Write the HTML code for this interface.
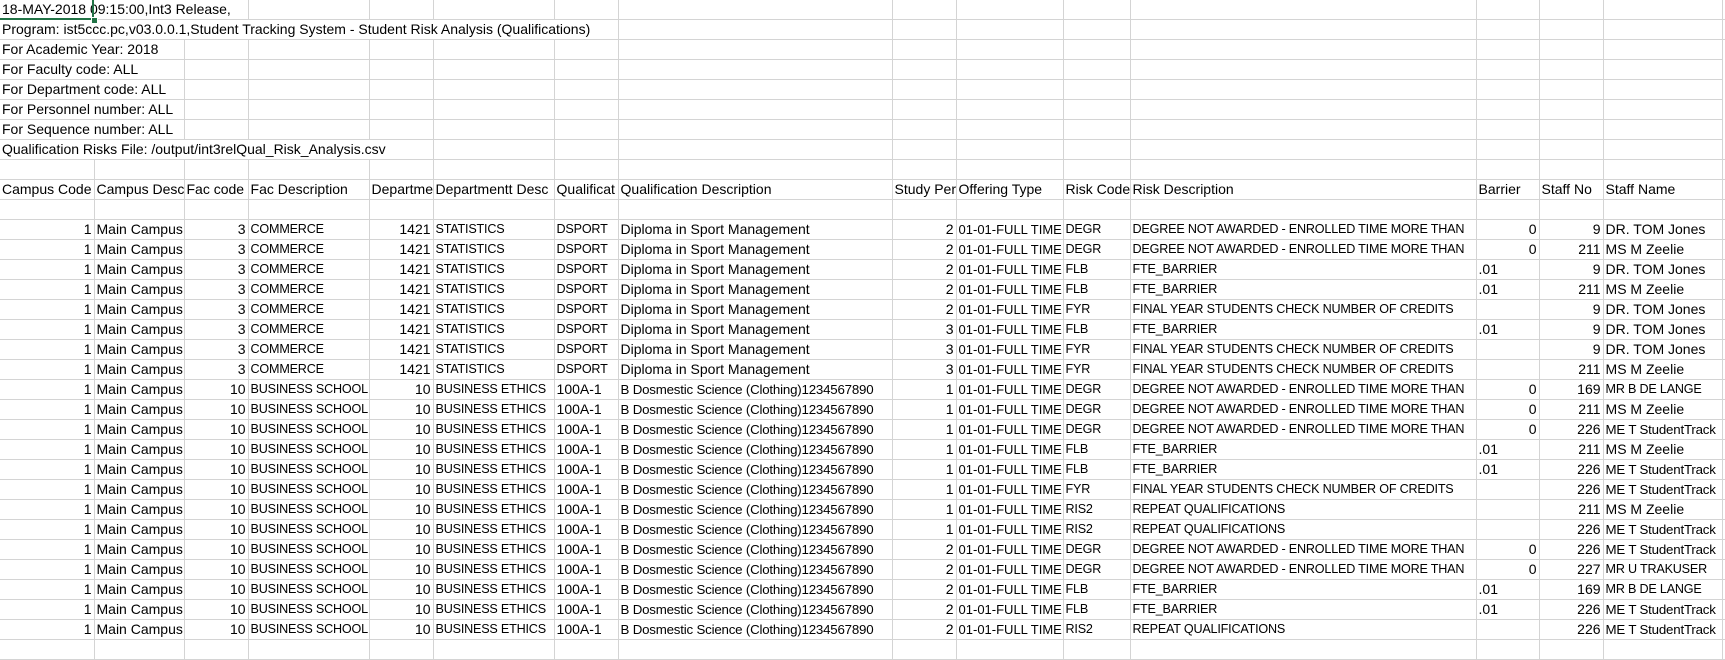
<!DOCTYPE html>
<html><head><meta charset="utf-8">
<style>
html,body{margin:0;padding:0;background:#fff;}
body{width:1725px;height:646px;overflow:hidden;position:relative;font-family:"Liberation Sans",Arial,sans-serif;font-size:14px;color:#000;}
table{border-collapse:collapse;table-layout:fixed;position:absolute;left:0;top:0;width:1725px;}
td{height:19px;padding:0 2px;border-right:1px solid #d4d4d4;border-bottom:1px solid #d4d4d4;white-space:nowrap;overflow:hidden;line-height:19px;vertical-align:middle;}
td.r{text-align:right;}
td.c{font-size:12.6px;letter-spacing:-0.2px;}
td.n{font-size:13px;}
td.t{font-size:13.3px;letter-spacing:-0.2px;}
.sel{position:absolute;left:0;top:0;width:92px;height:18px;border:2px solid #217346;border-left:none;border-top:none;}
.sq{position:absolute;left:91px;top:17px;width:5px;height:5px;background:#217346;border:1px solid #fff;}
</style></head><body>
<table>
<colgroup><col style="width:94px"><col style="width:90px"><col style="width:64px"><col style="width:121px"><col style="width:64px"><col style="width:121px"><col style="width:64px"><col style="width:274px"><col style="width:64px"><col style="width:107px"><col style="width:67px"><col style="width:346px"><col style="width:63px"><col style="width:64px"><col style="width:119px"><col style="width:3px"></colgroup>
<tr><td colspan="3">18-MAY-2018 09:15:00,Int3 Release,</td><td></td><td></td><td></td><td></td><td></td><td></td><td></td><td></td><td></td><td></td><td></td><td></td><td></td></tr>
<tr><td colspan="7">Program: ist5ccc.pc,v03.0.0.1,Student Tracking System - Student Risk Analysis (Qualifications)</td><td></td><td></td><td></td><td></td><td></td><td></td><td></td><td></td><td></td></tr>
<tr><td colspan="2">For Academic Year: 2018</td><td></td><td></td><td></td><td></td><td></td><td></td><td></td><td></td><td></td><td></td><td></td><td></td><td></td></tr>
<tr><td colspan="2">For Faculty code: ALL</td><td></td><td></td><td></td><td></td><td></td><td></td><td></td><td></td><td></td><td></td><td></td><td></td><td></td></tr>
<tr><td colspan="2">For Department code: ALL</td><td></td><td></td><td></td><td></td><td></td><td></td><td></td><td></td><td></td><td></td><td></td><td></td><td></td></tr>
<tr><td colspan="2">For Personnel number: ALL</td><td></td><td></td><td></td><td></td><td></td><td></td><td></td><td></td><td></td><td></td><td></td><td></td><td></td></tr>
<tr><td colspan="2">For Sequence number: ALL</td><td></td><td></td><td></td><td></td><td></td><td></td><td></td><td></td><td></td><td></td><td></td><td></td><td></td></tr>
<tr><td colspan="5">Qualification Risks File: /output/int3relQual_Risk_Analysis.csv</td><td></td><td></td><td></td><td></td><td></td><td></td><td></td><td></td><td></td><td></td><td></td></tr>
<tr><td></td><td></td><td></td><td></td><td></td><td></td><td></td><td></td><td></td><td></td><td></td><td></td><td></td><td></td><td></td><td></td></tr>
<tr><td>Campus Code</td><td>Campus Desc</td><td>Fac code</td><td>Fac Description</td><td>Departme</td><td>Departmentt Desc</td><td>Qualificat</td><td>Qualification Description</td><td>Study Peri</td><td>Offering Type</td><td>Risk Code</td><td>Risk Description</td><td>Barrier</td><td>Staff No</td><td>Staff Name</td><td></td></tr>
<tr><td></td><td></td><td></td><td></td><td></td><td></td><td></td><td></td><td></td><td></td><td></td><td></td><td></td><td></td><td></td><td></td></tr>
<tr><td class="r">1</td><td>Main Campus</td><td class="r">3</td><td class="c">COMMERCE</td><td class="r">1421</td><td class="c">STATISTICS</td><td class="c">DSPORT</td><td>Diploma in Sport Management</td><td class="r">2</td><td class="n">01-01-FULL TIME</td><td class="c">DEGR</td><td class="c">DEGREE NOT AWARDED - ENROLLED TIME MORE THAN</td><td class="r">0</td><td class="r">9</td><td>DR. TOM Jones</td><td></td></tr>
<tr><td class="r">1</td><td>Main Campus</td><td class="r">3</td><td class="c">COMMERCE</td><td class="r">1421</td><td class="c">STATISTICS</td><td class="c">DSPORT</td><td>Diploma in Sport Management</td><td class="r">2</td><td class="n">01-01-FULL TIME</td><td class="c">DEGR</td><td class="c">DEGREE NOT AWARDED - ENROLLED TIME MORE THAN</td><td class="r">0</td><td class="r">211</td><td>MS M Zeelie</td><td></td></tr>
<tr><td class="r">1</td><td>Main Campus</td><td class="r">3</td><td class="c">COMMERCE</td><td class="r">1421</td><td class="c">STATISTICS</td><td class="c">DSPORT</td><td>Diploma in Sport Management</td><td class="r">2</td><td class="n">01-01-FULL TIME</td><td class="c">FLB</td><td class="c">FTE_BARRIER</td><td>.01</td><td class="r">9</td><td>DR. TOM Jones</td><td></td></tr>
<tr><td class="r">1</td><td>Main Campus</td><td class="r">3</td><td class="c">COMMERCE</td><td class="r">1421</td><td class="c">STATISTICS</td><td class="c">DSPORT</td><td>Diploma in Sport Management</td><td class="r">2</td><td class="n">01-01-FULL TIME</td><td class="c">FLB</td><td class="c">FTE_BARRIER</td><td>.01</td><td class="r">211</td><td>MS M Zeelie</td><td></td></tr>
<tr><td class="r">1</td><td>Main Campus</td><td class="r">3</td><td class="c">COMMERCE</td><td class="r">1421</td><td class="c">STATISTICS</td><td class="c">DSPORT</td><td>Diploma in Sport Management</td><td class="r">2</td><td class="n">01-01-FULL TIME</td><td class="c">FYR</td><td class="c">FINAL YEAR STUDENTS CHECK NUMBER OF CREDITS</td><td></td><td class="r">9</td><td>DR. TOM Jones</td><td></td></tr>
<tr><td class="r">1</td><td>Main Campus</td><td class="r">3</td><td class="c">COMMERCE</td><td class="r">1421</td><td class="c">STATISTICS</td><td class="c">DSPORT</td><td>Diploma in Sport Management</td><td class="r">3</td><td class="n">01-01-FULL TIME</td><td class="c">FLB</td><td class="c">FTE_BARRIER</td><td>.01</td><td class="r">9</td><td>DR. TOM Jones</td><td></td></tr>
<tr><td class="r">1</td><td>Main Campus</td><td class="r">3</td><td class="c">COMMERCE</td><td class="r">1421</td><td class="c">STATISTICS</td><td class="c">DSPORT</td><td>Diploma in Sport Management</td><td class="r">3</td><td class="n">01-01-FULL TIME</td><td class="c">FYR</td><td class="c">FINAL YEAR STUDENTS CHECK NUMBER OF CREDITS</td><td></td><td class="r">9</td><td>DR. TOM Jones</td><td></td></tr>
<tr><td class="r">1</td><td>Main Campus</td><td class="r">3</td><td class="c">COMMERCE</td><td class="r">1421</td><td class="c">STATISTICS</td><td class="c">DSPORT</td><td>Diploma in Sport Management</td><td class="r">3</td><td class="n">01-01-FULL TIME</td><td class="c">FYR</td><td class="c">FINAL YEAR STUDENTS CHECK NUMBER OF CREDITS</td><td></td><td class="r">211</td><td>MS M Zeelie</td><td></td></tr>
<tr><td class="r">1</td><td>Main Campus</td><td class="r">10</td><td class="c">BUSINESS SCHOOL</td><td class="r">10</td><td class="c">BUSINESS ETHICS</td><td>100A-1</td><td class="t">B Dosmestic Science (Clothing)1234567890</td><td class="r">1</td><td class="n">01-01-FULL TIME</td><td class="c">DEGR</td><td class="c">DEGREE NOT AWARDED - ENROLLED TIME MORE THAN</td><td class="r">0</td><td class="r">169</td><td class="c">MR B DE LANGE</td><td></td></tr>
<tr><td class="r">1</td><td>Main Campus</td><td class="r">10</td><td class="c">BUSINESS SCHOOL</td><td class="r">10</td><td class="c">BUSINESS ETHICS</td><td>100A-1</td><td class="t">B Dosmestic Science (Clothing)1234567890</td><td class="r">1</td><td class="n">01-01-FULL TIME</td><td class="c">DEGR</td><td class="c">DEGREE NOT AWARDED - ENROLLED TIME MORE THAN</td><td class="r">0</td><td class="r">211</td><td>MS M Zeelie</td><td></td></tr>
<tr><td class="r">1</td><td>Main Campus</td><td class="r">10</td><td class="c">BUSINESS SCHOOL</td><td class="r">10</td><td class="c">BUSINESS ETHICS</td><td>100A-1</td><td class="t">B Dosmestic Science (Clothing)1234567890</td><td class="r">1</td><td class="n">01-01-FULL TIME</td><td class="c">DEGR</td><td class="c">DEGREE NOT AWARDED - ENROLLED TIME MORE THAN</td><td class="r">0</td><td class="r">226</td><td class="t">ME T StudentTrack</td><td></td></tr>
<tr><td class="r">1</td><td>Main Campus</td><td class="r">10</td><td class="c">BUSINESS SCHOOL</td><td class="r">10</td><td class="c">BUSINESS ETHICS</td><td>100A-1</td><td class="t">B Dosmestic Science (Clothing)1234567890</td><td class="r">1</td><td class="n">01-01-FULL TIME</td><td class="c">FLB</td><td class="c">FTE_BARRIER</td><td>.01</td><td class="r">211</td><td>MS M Zeelie</td><td></td></tr>
<tr><td class="r">1</td><td>Main Campus</td><td class="r">10</td><td class="c">BUSINESS SCHOOL</td><td class="r">10</td><td class="c">BUSINESS ETHICS</td><td>100A-1</td><td class="t">B Dosmestic Science (Clothing)1234567890</td><td class="r">1</td><td class="n">01-01-FULL TIME</td><td class="c">FLB</td><td class="c">FTE_BARRIER</td><td>.01</td><td class="r">226</td><td class="t">ME T StudentTrack</td><td></td></tr>
<tr><td class="r">1</td><td>Main Campus</td><td class="r">10</td><td class="c">BUSINESS SCHOOL</td><td class="r">10</td><td class="c">BUSINESS ETHICS</td><td>100A-1</td><td class="t">B Dosmestic Science (Clothing)1234567890</td><td class="r">1</td><td class="n">01-01-FULL TIME</td><td class="c">FYR</td><td class="c">FINAL YEAR STUDENTS CHECK NUMBER OF CREDITS</td><td></td><td class="r">226</td><td class="t">ME T StudentTrack</td><td></td></tr>
<tr><td class="r">1</td><td>Main Campus</td><td class="r">10</td><td class="c">BUSINESS SCHOOL</td><td class="r">10</td><td class="c">BUSINESS ETHICS</td><td>100A-1</td><td class="t">B Dosmestic Science (Clothing)1234567890</td><td class="r">1</td><td class="n">01-01-FULL TIME</td><td class="c">RIS2</td><td class="c">REPEAT QUALIFICATIONS</td><td></td><td class="r">211</td><td>MS M Zeelie</td><td></td></tr>
<tr><td class="r">1</td><td>Main Campus</td><td class="r">10</td><td class="c">BUSINESS SCHOOL</td><td class="r">10</td><td class="c">BUSINESS ETHICS</td><td>100A-1</td><td class="t">B Dosmestic Science (Clothing)1234567890</td><td class="r">1</td><td class="n">01-01-FULL TIME</td><td class="c">RIS2</td><td class="c">REPEAT QUALIFICATIONS</td><td></td><td class="r">226</td><td class="t">ME T StudentTrack</td><td></td></tr>
<tr><td class="r">1</td><td>Main Campus</td><td class="r">10</td><td class="c">BUSINESS SCHOOL</td><td class="r">10</td><td class="c">BUSINESS ETHICS</td><td>100A-1</td><td class="t">B Dosmestic Science (Clothing)1234567890</td><td class="r">2</td><td class="n">01-01-FULL TIME</td><td class="c">DEGR</td><td class="c">DEGREE NOT AWARDED - ENROLLED TIME MORE THAN</td><td class="r">0</td><td class="r">226</td><td class="t">ME T StudentTrack</td><td></td></tr>
<tr><td class="r">1</td><td>Main Campus</td><td class="r">10</td><td class="c">BUSINESS SCHOOL</td><td class="r">10</td><td class="c">BUSINESS ETHICS</td><td>100A-1</td><td class="t">B Dosmestic Science (Clothing)1234567890</td><td class="r">2</td><td class="n">01-01-FULL TIME</td><td class="c">DEGR</td><td class="c">DEGREE NOT AWARDED - ENROLLED TIME MORE THAN</td><td class="r">0</td><td class="r">227</td><td class="c">MR U TRAKUSER</td><td></td></tr>
<tr><td class="r">1</td><td>Main Campus</td><td class="r">10</td><td class="c">BUSINESS SCHOOL</td><td class="r">10</td><td class="c">BUSINESS ETHICS</td><td>100A-1</td><td class="t">B Dosmestic Science (Clothing)1234567890</td><td class="r">2</td><td class="n">01-01-FULL TIME</td><td class="c">FLB</td><td class="c">FTE_BARRIER</td><td>.01</td><td class="r">169</td><td class="c">MR B DE LANGE</td><td></td></tr>
<tr><td class="r">1</td><td>Main Campus</td><td class="r">10</td><td class="c">BUSINESS SCHOOL</td><td class="r">10</td><td class="c">BUSINESS ETHICS</td><td>100A-1</td><td class="t">B Dosmestic Science (Clothing)1234567890</td><td class="r">2</td><td class="n">01-01-FULL TIME</td><td class="c">FLB</td><td class="c">FTE_BARRIER</td><td>.01</td><td class="r">226</td><td class="t">ME T StudentTrack</td><td></td></tr>
<tr><td class="r">1</td><td>Main Campus</td><td class="r">10</td><td class="c">BUSINESS SCHOOL</td><td class="r">10</td><td class="c">BUSINESS ETHICS</td><td>100A-1</td><td class="t">B Dosmestic Science (Clothing)1234567890</td><td class="r">2</td><td class="n">01-01-FULL TIME</td><td class="c">RIS2</td><td class="c">REPEAT QUALIFICATIONS</td><td></td><td class="r">226</td><td class="t">ME T StudentTrack</td><td></td></tr>
<tr><td></td><td></td><td></td><td></td><td></td><td></td><td></td><td></td><td></td><td></td><td></td><td></td><td></td><td></td><td></td><td></td></tr>
</table>
<div class="sel"></div><div class="sq"></div>
</body></html>
